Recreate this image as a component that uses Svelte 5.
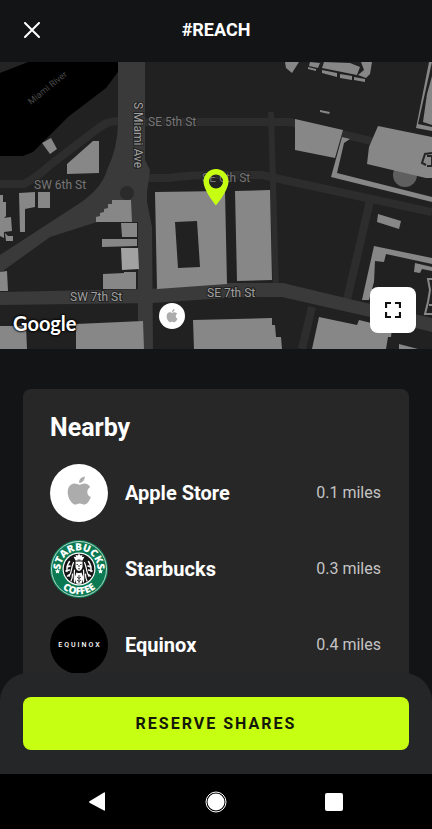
<script>
  const places = [
    { id: 'apple', name: 'Apple Store', distance: '0.1 miles' },
    { id: 'starbucks', name: 'Starbucks', distance: '0.3 miles' },
    { id: 'equinox', name: 'Equinox', distance: '0.4 miles' }
  ];

  const buildings = [
    '42,81 51,76 57,87 50,92',
    '67,102 93,79 99,79 99,111 67,112',
    '19,131 35,130 35,145 25,147 25,170 20,170',
    '38,130 50,130 50,146 38,146',
    '0,133 3,133 3,140 6,140 6,154 4,156 4,176 0,174',
    '3,156 11,155 12,169 4,170',
    '5,171 8,174 13,174 13,179 6,179',
    '112,138 131,138 132,160 96,160 96,155 100,154 100,151 104,150 104,147 108,146 108,142 112,142',
    '121,161 137,161 137,175 122,175',
    '102,177 137,177 137,184 102,185',
    '103,212 124,211 124,210 136,210 136,227 103,227',
    '0,210 7,209 8,229 0,229',
    '0,264 26,264 27,287 0,287',
    '76,262 143,259 144,287 76,287',
    '235,129 270,128 272,218 237,219',
    '193,258 272,256 272,263 275,263 276,275 281,275 282,287 194,287',
    '319,255 357,263 359,258 392,266 391,275 388,275 386,287 312,287',
    '399,282 418,287 399,287',
    '378,152 401,159 399,167 377,160',
    '374,184 432,196 432,202 386,192 384,200 375,199 374,220 369,238 362,238',
    '415,201 432,205 432,209 422,207 420,211 414,210',
    '295,57 343,68 335,96 295,88',
    '378,64 432,75 432,116 426,116 367,102 369,85',
    '342,75 350,77 344,81 337,111 432,135 432,140 331,115',
    '285,0 299,0 292,11 286,6',
    '320,48 330,50 329,52 320,50',
    '310,0 320,1 318,6 309,4',
    '324,0 350,1 360,5 357,13 322,6',
    '308,5 316,7 316,9 308,7',
    '322,8 337,11 337,15 322,11',
    '340,12 352,14 352,18 340,16',
    '354,15 365,17 365,20 354,18',
    '361,0 372,0 370,12 366,16 358,13 364,8',
    '429,0 432,0 418,62 432,65 432,69 416,66'
  ];
</script>

{#snippet appleMark()}
  <path
    d="M15.8 5.4c1-1.200 1.600-2.800 1.400-4.400-1.400.1-3.100 1-4.100 2.100-.9 1-1.700 2.700-1.500 4.200 1.600.2 3.200-.7 4.200-1.900zM17.200 7.900c-2.300-.1-4.300 1.300-5.400 1.300-1.100 0-2.800-1.200-4.600-1.200-2.400 0-4.600 1.400-5.800 3.500-2.500 4.300-.7 10.600 1.700 14.100 1.200 1.700 2.600 3.600 4.500 3.500 1.800-.1 2.500-1.100 4.600-1.100s2.800 1.100 4.700 1.100c1.900 0 3.200-1.700 4.400-3.400 1-1.500 1.700-3 2-4.100-2.100-.9-3.500-2.800-3.500-5.200 0-2.100 1.100-3.900 2.900-5-1.300-2-3.400-3.400-5.500-3.500z"
    fill="#acacac"
  />
{/snippet}

<div class="screen">
  <header class="bar">
    <button class="close" type="button" aria-label="Close">
      <svg viewBox="0 0 16 16" width="16" height="16" aria-hidden="true">
        <path d="M1 1l14 14M15 1L1 15" stroke="#fff" stroke-width="2" stroke-linecap="round" />
      </svg>
    </button>
    <h1>#REACH</h1>
  </header>

  <section class="map" aria-label="Map">
    <svg class="canvas" viewBox="0 0 432 287" preserveAspectRatio="xMidYMid slice">
      <rect width="432" height="287" fill="#212121" />
      <path d="M0 0h118v10L106 26 68 55 33 90 23 94H0z" fill="#000" />
      <path d="M0 0h28L0 11z" fill="#242424" />

      <!-- side streets -->
      <g fill="none" stroke="#2d2d2d">
        <path d="M120 59C106 59 103 63 92 71L50 103Q36 116 24 122H0" stroke-width="8" />
        <path d="M140 60H290L432 93" stroke-width="8" />
        <path d="M145 116H168Q190 113 216 113H262L284 118 432 150" stroke-width="8" />
        <path d="M271 50L276 228" stroke-width="6" />
        <path d="M370 139L346 242M312 245L302 287" stroke-width="8" />
      </g>

      <!-- main roads -->
      <path
        d="M118 0H145V98L150 108 147 130 147 140 152 165 153 287H138V160H97L50 175 0 211V193L80 141Q102 126 107 108 118 85 118 60z"
        fill="#3a3a3a"
      />
      <path
        d="M0 230L150 227 225 221H283L362 240 432 256V270L370 255 282 235H240L153 241 0 243z"
        fill="#3a3a3a"
      />
      <circle cx="127" cy="131" r="7" fill="#2a2a2a" />
      <circle cx="405" cy="113" r="12" fill="#5f5f5f" />

      <g fill="#878787">
        {#each buildings as points (points)}
          <polygon {points} />
        {/each}
        <path
          d="M155 130L225 129 227 222 157 227zM175 160L178 206 200 205 197 159z"
          fill-rule="evenodd"
        />
      </g>
      <path d="M121 186h17l1 21-17 1z" fill="#a2a2a2" />
      <path d="M427 32l5-18V63L423 60z" fill="#878787" />
      <path d="M432 91l-7 1-3 9 4 2M427 94h5v10h-5" fill="none" stroke="#252525" stroke-width="2" />
      <path d="M432 217h-4l2 11-2 12-3 12h7M429 243h3" fill="none" stroke="#878787" stroke-width="2" />

      <g class="labels">
        <text class="river" transform="translate(31 43) rotate(-39)">Miami River</text>
        <text class="main" transform="translate(134 40) rotate(90)">S Miami Ave</text>
        <text x="148" y="64">SE 5th St</text>
        <text x="202" y="120">SE 6th St</text>
        <text x="34" y="127">SW 6th St</text>
        <text class="main" x="70" y="239">SW 7th St</text>
        <text class="main" x="207" y="235">SE 7th St</text>
      </g>

      <path
        d="M216 107a12.500 12.500 0 0 0-12.500 12.500c0 9 12.500 24 12.500 24s12.500-15 12.500-24A12.500 12.500 0 0 0 216 107zm0 5.500a7 7 0 1 1 0 14 7 7 0 0 1 0-14z"
        fill="#c6ff12"
        fill-rule="evenodd"
      />
      <circle cx="172" cy="254" r="13" fill="#fff" />
      <g transform="translate(166.500 246.500) scale(.47)">{@render appleMark()}</g>
    </svg>
    <span class="brand">Google</span>
    <button class="expand" type="button" aria-label="Expand map">
      <svg viewBox="0 0 16 16" width="16" height="16" aria-hidden="true">
        <path d="M1 6V1h5M10 1h5v5M15 10v5h-5M6 15H1v-5" fill="none" stroke="#111" stroke-width="2.200" />
      </svg>
    </button>
  </section>

  <main>
    <section class="card">
      <h2>Nearby</h2>
      <ul>
        {#each places as place (place.id)}
          <li>
            <svg class="logo" viewBox="0 0 58 58" aria-hidden="true">
              {#if place.id === 'apple'}
                <circle cx="29" cy="29" r="29" fill="#fff" />
                <g transform="translate(17.500 11.500)">{@render appleMark()}</g>
              {:else if place.id === 'starbucks'}
                <defs>
                  <path id="arc-top" d="M10.500 29a18.500 18.500 0 0 1 37 0" />
                  <path id="arc-bottom" d="M3.500 29a25.500 25.500 0 0 0 51 0" />
                </defs>
                <circle cx="29" cy="29" r="29" fill="#0b7a53" />
                <circle cx="29" cy="29" r="27.500" fill="none" stroke="#b9d8cc" stroke-width="1" />
                <circle cx="29" cy="29" r="16.500" fill="#fff" />
                <circle cx="29" cy="29" r="15.300" fill="#151515" />
                <g class="ring">
                  <text><textPath href="#arc-top" startOffset="50%">STARBUCKS</textPath></text>
                  <text><textPath href="#arc-bottom" startOffset="50%">COFFEE</textPath></text>
                </g>
                <path
                  d="M7.500 28.500l.8 1.700 1.900.2-1.400 1.300.4 1.900-1.700-.9-1.700.9.4-1.900-1.400-1.300 1.900-.2zM50.500 28.500l.8 1.700 1.900.2-1.400 1.300.4 1.900-1.700-.9-1.700.9.4-1.900-1.400-1.300 1.900-.2z"
                  fill="#fff"
                />
                <!-- siren: crown, face, hair and tails -->
                <g fill="#fff">
                  <path d="M29 13.500l1.200 2 2.300-.5-.6 2 2.500-.2-1.900 3.700h-7l-1.900-3.700 2.500.2-.6-2 2.300.5z" />
                  <path d="M25.500 21.500h7v5.500q-.8 3.600-3.500 4-2.700-.4-3.500-4z" />
                  <path d="M26.500 32.500q2.500 1.200 5 0l2 5.500-2 5.800h-5l-2-5.800z" />
                </g>
                <g fill="none" stroke="#fff" stroke-linecap="round">
                  <path
                    d="M23.500 22.500q-1.500 3.500-2 7t-2.500 7M22.500 34q0 4-1.500 7M34.500 22.500q1.500 3.500 2 7t2.500 7M35.500 34q0 4 1.500 7M24.500 30q-.5 4 0 12M33.500 30q.5 4 0 12"
                    stroke-width="1.200"
                  />
                  <path
                    d="M19.500 21.500q-3 4-2.500 10M17 27l3-1M16 31l3.500-1M38.500 21.500q3 4 2.500 10M41 27l-3-1M42 31l-3.500-1M17.500 36l2-1.500M40.500 36l-2-1.500"
                    stroke-width="1.500"
                  />
                </g>
                <path
                  d="M26.500 24.500h1.500M30 24.500h1.500M29 25v2M28 28.800h2M27.500 20h3M29 35v8M27 37l2 1.500 2-1.500M27 40l2 1.500 2-1.500"
                  fill="none"
                  stroke="#151515"
                  stroke-width=".8"
                />
              {:else}
                <circle cx="29" cy="29" r="29" fill="#000" />
                <text class="wordmark" x="30" y="31">EQUINOX</text>
              {/if}
            </svg>
            <span class="name">{place.name}</span>
            <span class="distance">{place.distance}</span>
          </li>
        {/each}
      </ul>
    </section>
  </main>

  <div class="dock">
    <button class="reserve" type="button">RESERVE SHARES</button>
  </div>

  <nav aria-label="System">
    <button type="button" aria-label="Back">
      <svg viewBox="0 0 22 22" width="22" height="22">
        <path d="M18 3v16q0 1-1 .5L2.500 11.700q-1-.7 0-1.400L17 1.500q1-.5 1 .5z" fill="#fff" />
      </svg>
    </button>
    <button type="button" aria-label="Home">
      <svg viewBox="0 0 22 22" width="22" height="22">
        <circle cx="11" cy="11" r="10" fill="none" stroke="#fff" stroke-width="1" />
        <circle cx="11" cy="11" r="8.500" fill="#fff" />
      </svg>
    </button>
    <button type="button" aria-label="Recent apps">
      <svg viewBox="0 0 22 22" width="22" height="22">
        <rect x="2" y="2" width="18" height="18" rx="2" fill="#fff" />
      </svg>
    </button>
  </nav>
</div>

<style>
  :global(body) {
    background: #121416;
  }

  .screen {
    display: flex;
    flex-direction: column;
    height: 100vh;
    background: #121416;
    color: #fff;
    font-family: Roboto, 'Liberation Sans', sans-serif;
  }

  button {
    padding: 0;
    border: 0;
    background: none;
    font-family: inherit;
    cursor: pointer;
  }

  button:focus-visible {
    outline: 2px solid #fff;
    outline-offset: 2px;
  }

  svg {
    display: block;
  }

  .bar {
    flex: none;
    display: grid;
    grid-template-columns: 32px 1fr 32px;
    align-items: center;
    height: 62px;
    padding: 0 16px 2px;
    box-sizing: border-box;
  }

  .close {
    display: grid;
    place-items: center;
    height: 32px;
  }

  h1 {
    margin: 0;
    font-size: 18px;
    line-height: 24px;
    font-weight: 700;
    text-align: center;
  }

  .map {
    position: relative;
    flex: none;
    height: 287px;
  }

  .canvas {
    width: 100%;
    height: 100%;
  }

  .labels {
    fill: #767676;
    stroke: #212121;
    stroke-width: 2px;
    paint-order: stroke;
    font-size: 12px;
  }

  .labels .main {
    fill: #a0a0a0;
  }

  .labels .river {
    fill: #484848;
    stroke: none;
    font-size: 9px;
  }

  .brand {
    position: absolute;
    left: 13px;
    bottom: 14px;
    font-family: Lato, sans-serif;
    font-size: 20px;
    line-height: 24px;
    font-weight: 700;
    text-shadow: 0 0 2px #000, 0 0 2px #000, 0 0 3px #000;
  }

  .expand {
    position: absolute;
    right: 16px;
    bottom: 16px;
    display: grid;
    place-items: center;
    width: 46px;
    height: 46px;
    border-radius: 8px;
    background: #fff;
  }

  main {
    flex: 1;
    min-height: 0;
    padding: 40px 23px 0;
    overflow-y: auto;
    scrollbar-width: none;
  }

  .card {
    padding: 23px 28px 48px 27px;
    border-radius: 8px;
    background: #272727;
  }

  h2 {
    margin: 0 0 20px;
    font-size: 25px;
    line-height: 32px;
    font-weight: 700;
  }

  ul {
    display: flex;
    flex-direction: column;
    gap: 18px;
    margin: 0;
    padding: 0;
    list-style: none;
  }

  li {
    display: flex;
    align-items: center;
  }

  .logo {
    flex: none;
    width: 58px;
    height: 58px;
    margin-right: 17px;
  }

  .ring {
    fill: #fff;
    font-family: 'Open Sans', sans-serif;
    font-size: 10px;
    font-weight: 800;
    text-anchor: middle;
  }

  .wordmark {
    fill: #fff;
    font-size: 7px;
    font-weight: 500;
    letter-spacing: 2px;
    text-anchor: middle;
  }

  .name {
    flex: 1;
    font-size: 20px;
    line-height: 24px;
    font-weight: 700;
  }

  .distance {
    color: #c4c4c4;
    font-size: 16px;
    line-height: 24px;
  }

  .dock {
    position: relative;
    flex: none;
    margin-top: -28px;
    padding: 24px 23px;
    border-radius: 28px 28px 0 0;
    background: #242628;
  }

  .reserve {
    display: block;
    width: 100%;
    height: 53px;
    border-radius: 8px;
    background: #c6ff12;
    color: #14180a;
    font-size: 16px;
    font-weight: 700;
    letter-spacing: 2px;
  }

  nav {
    flex: none;
    display: flex;
    justify-content: center;
    gap: 96px;
    height: 55px;
    background: #000;
  }

  nav button {
    display: grid;
    place-items: center;
    width: 22px;
  }
</style>
